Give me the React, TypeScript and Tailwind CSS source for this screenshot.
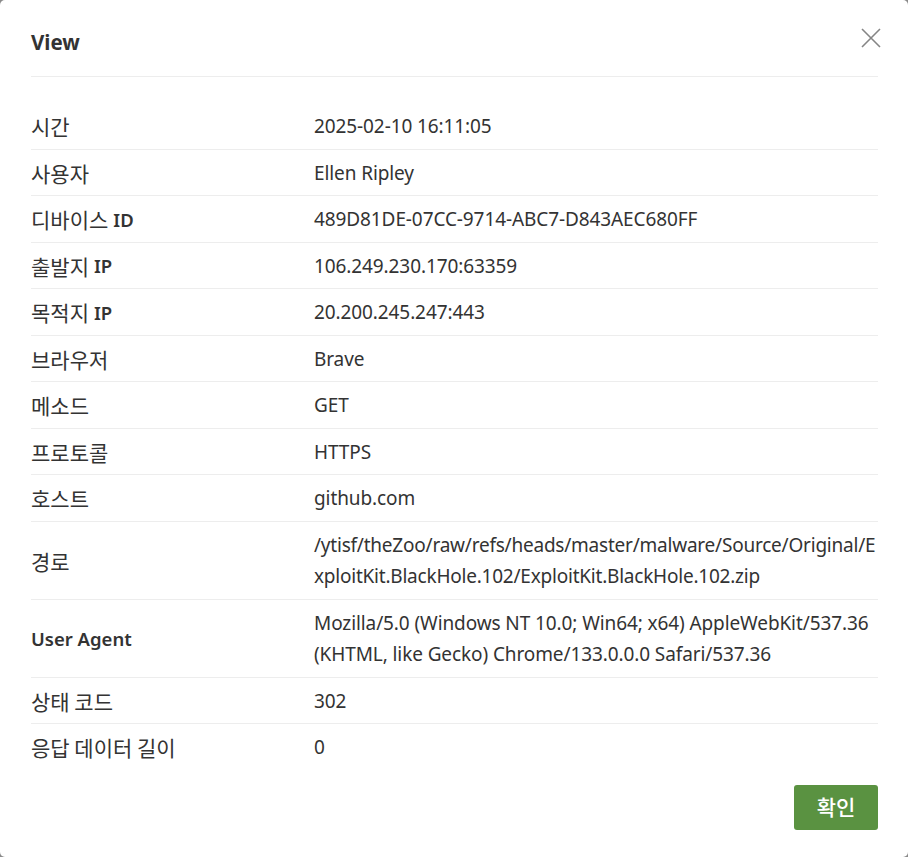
import React from "react";

type Row = {
  ko: string;
  en?: string;
  value: string;
  breakAll?: boolean;
};

const rows: Row[] = [
  { ko: "시간", value: "2025-02-10 16:11:05" },
  { ko: "사용자", value: "Ellen Ripley" },
  { ko: "디바이스", en: "ID", value: "489D81DE-07CC-9714-ABC7-D843AEC680FF" },
  { ko: "출발지", en: "IP", value: "106.249.230.170:63359" },
  { ko: "목적지", en: "IP", value: "20.200.245.247:443" },
  { ko: "브라우저", value: "Brave" },
  { ko: "메소드", value: "GET" },
  { ko: "프로토콜", value: "HTTPS" },
  { ko: "호스트", value: "github.com" },
  {
    ko: "경로",
    value:
      "/ytisf/theZoo/raw/refs/heads/master/malware/Source/Original/ExploitKit.BlackHole.102/ExploitKit.BlackHole.102.zip",
    breakAll: true,
  },
  {
    ko: "",
    en: "User Agent",
    value:
      "Mozilla/5.0 (Windows NT 10.0; Win64; x64) AppleWebKit/537.36 (KHTML, like Gecko) Chrome/133.0.0.0 Safari/537.36",
  },
  { ko: "상태 코드", value: "302" },
  { ko: "응답 데이터 길이", value: "0" },
];

const font = {
  fontFamily: '"Noto Sans", "Noto Sans CJK KR", sans-serif',
};

const koFont = {
  fontFamily: '"Noto Sans CJK KR", sans-serif',
};

function CloseIcon() {
  return (
    <svg width="20" height="20" viewBox="0 0 20 20" fill="none">
      <path d="M1 1L19 19M19 1L1 19" stroke="#858585" strokeWidth="1.6" />
    </svg>
  );
}

export default function App() {
  return (
    <div className="w-full h-[857px] bg-[#8a8a8a]" style={font}>
      <div className="h-full w-full bg-white rounded-[5px] pl-[31px] pr-[30px] flex flex-col text-[#333]">
        {/* Header */}
        <div className="h-[77px] flex justify-between items-start border-b border-[#ededed] shrink-0">
          <h2 className="mt-[29px] text-[20.5px] leading-[26px] font-bold text-[#333]">
            View
          </h2>
          <button className="mt-[28px] mr-[-3px]">
            <CloseIcon />
          </button>
        </div>

        {/* Rows */}
        <div className="pt-[26px] flex flex-col divide-y divide-[#ededed]">
          {rows.map((row, i) => (
            <div key={i} className="flex items-center pt-[8px] pb-[6px]">
              <div className="w-[283px] shrink-0 flex items-center gap-[5px] h-[31.5px] text-[#333]">
                {row.ko && (
                  <span className="text-[21px] leading-none" style={koFont}>
                    {row.ko}
                  </span>
                )}
                {row.en && (
                  <span className="text-[18.5px] leading-none font-semibold">
                    {row.en}
                  </span>
                )}
              </div>
              <div
                className={`flex-1 min-w-0 text-[19px] leading-[31.5px] text-[#333] ${
                  row.breakAll
                    ? "break-all tracking-[-0.22px]"
                    : "break-words tracking-[-0.1px]"
                }`}
              >
                {row.value}
              </div>
            </div>
          ))}
        </div>

        {/* Footer */}
        <div className="flex justify-end pt-[15px]">
          <button
            className="w-[84px] h-[45px] rounded-[3px] bg-[#5a9241] text-white text-[21px] font-medium"
            style={koFont}
          >
            확인
          </button>
        </div>
      </div>
    </div>
  );
}
